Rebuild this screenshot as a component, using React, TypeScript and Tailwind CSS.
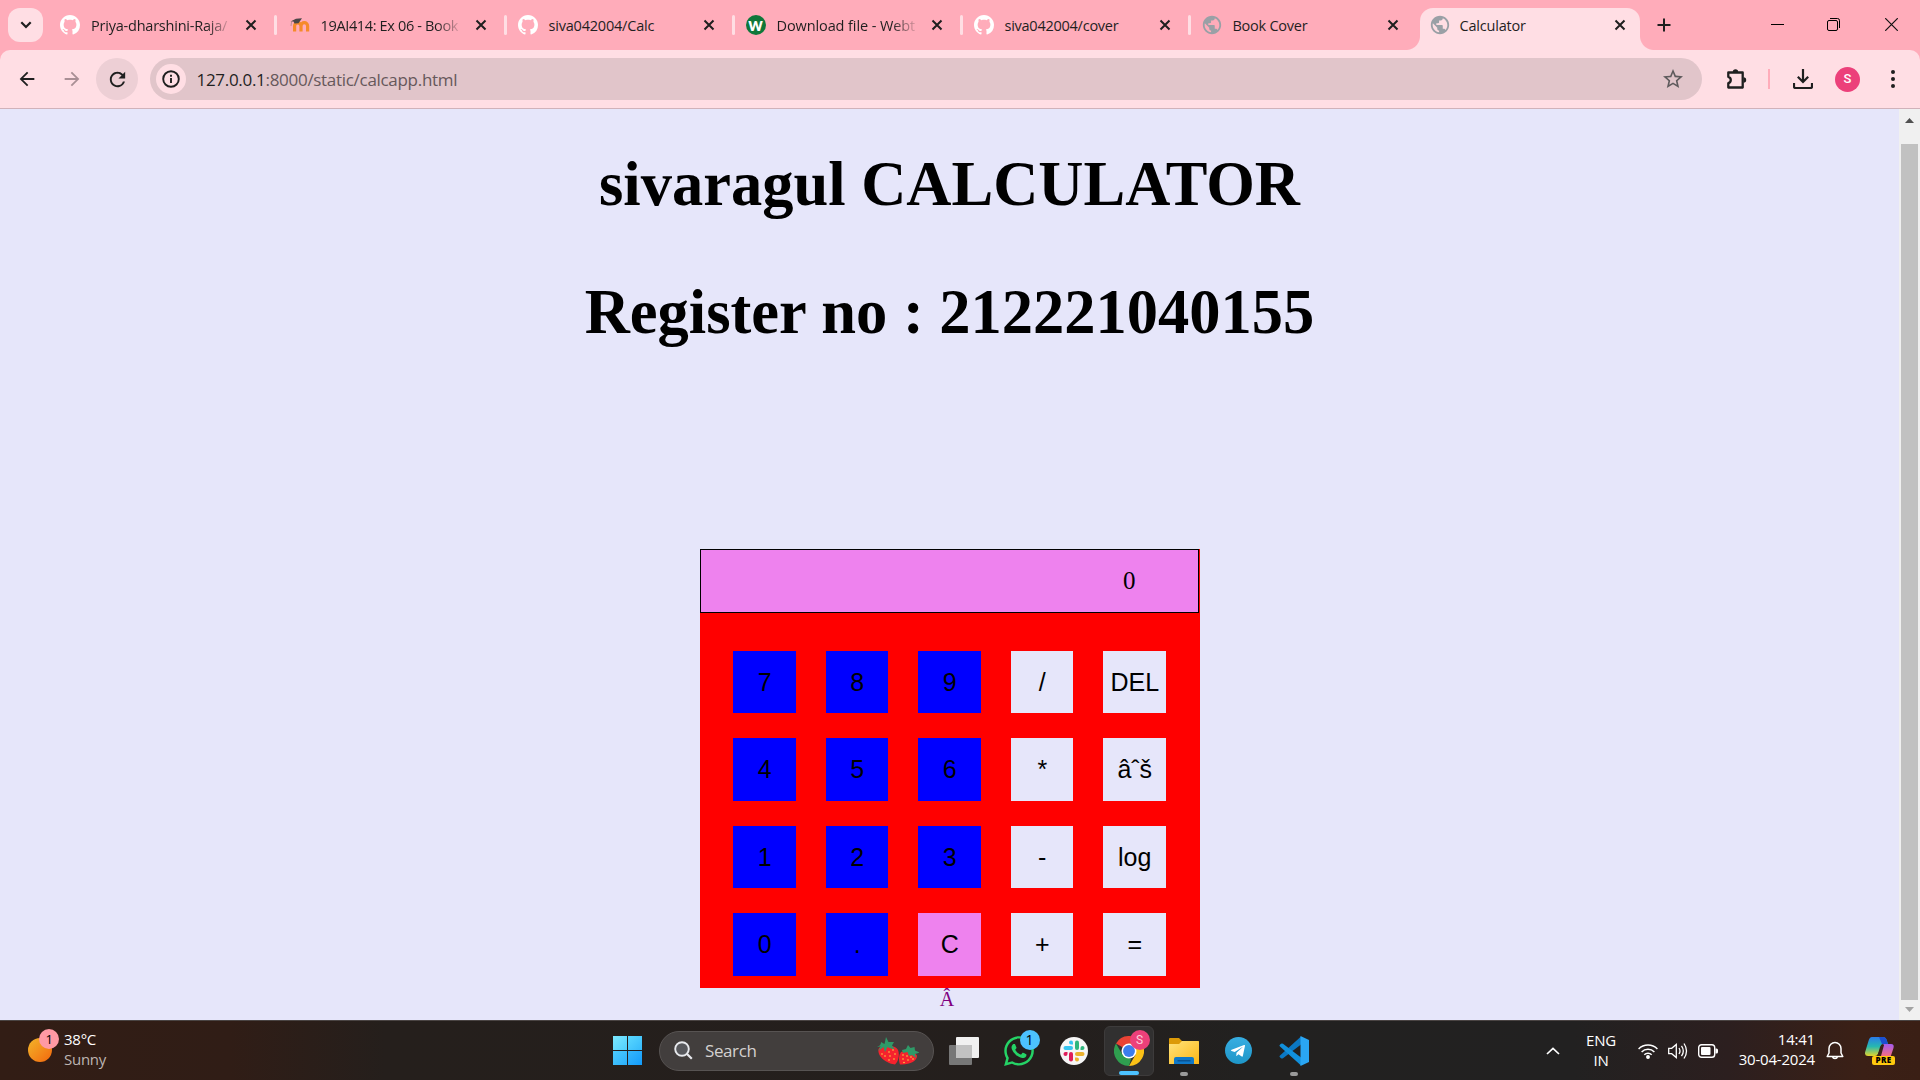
import React from "react";
import {
  MdArrowBack,
  MdArrowForward,
  MdPublic,
  MdRefresh,
  MdStarBorder,
} from "react-icons/md";
import { FaTelegramPlane, FaWhatsapp } from "react-icons/fa";

const GitHubMark = () => (
  <svg viewBox="0 0 16 16" className="h-5 w-5 fill-white">
    <path d="M8 0C3.58 0 0 3.58 0 8c0 3.54 2.29 6.53 5.47 7.59.4.07.55-.17.55-.38 0-.19-.01-.82-.01-1.49-2.01.37-2.53-.49-2.69-.94-.09-.23-.48-.94-.82-1.13-.28-.15-.68-.52-.01-.53.63-.01 1.08.58 1.23.82.72 1.21 1.87.87 2.33.66.07-.52.28-.87.51-1.07-1.78-.2-3.64-.89-3.64-3.95 0-.87.31-1.59.82-2.15-.08-.2-.36-1.02.08-2.12 0 0 .67-.21 2.2.82.64-.18 1.32-.27 2-.27s1.36.09 2 .27c1.53-1.04 2.2-.82 2.2-.82.44 1.1.16 1.92.08 2.12.51.56.82 1.27.82 2.15 0 3.07-1.87 3.75-3.65 3.95.29.25.54.73.54 1.48 0 1.07-.01 1.93-.01 2.2 0 .21.15.46.55.38A8.01 8.01 0 0 0 16 8c0-4.42-3.58-8-8-8z" />
  </svg>
);

const MoodleMark = () => (
  <svg viewBox="0 0 20 20" className="h-5 w-5">
    <path d="M4.600 16.500V11a3.200 3.200 0 0 1 6.400 0v5.500M11 11a3.200 3.200 0 0 1 6.600 0v5.500" fill="none" stroke="#f68a2a" strokeWidth="3.200" />
    <path d="M0.500 6.500 6 3.800l6-.6-3.500 5-4 .4-1-2z" fill="#4b4647" />
    <path d="M1.600 6.500 1 11" stroke="#b08a86" strokeWidth="0.800" />
  </svg>
);

const WMark = () => (
  <span className="flex h-5 w-5 items-center justify-center rounded-full bg-[#0f773a] pb-[3px] font-[Lato,sans-serif] text-[18px] leading-none font-black text-white">
    w
  </span>
);

const Globe = () => <MdPublic className="-m-px h-[22px] w-[22px] text-[#9aa0a6]" />;

const CloseX = () => (
  <svg viewBox="0 0 12 12" className="h-3 w-3 shrink-0">
    <path d="M1.500 1.500l9 9M10.500 1.500l-9 9" stroke="#1f1f1f" strokeWidth="2" />
  </svg>
);

const tabs = [
  { title: "Priya-dharshini-Raja/", icon: <GitHubMark />, track: "tracking-[-0.22px]", fade: true },
  { title: "19AI414: Ex 06 - Book", icon: <MoodleMark />, track: "tracking-[-0.35px]", fade: true },
  { title: "siva042004/Calc", icon: <GitHubMark />, track: "tracking-[-0.2px]", fade: false },
  { title: "Download file - Webt", icon: <WMark />, track: "tracking-[-0.1px]", fade: true },
  { title: "siva042004/cover", icon: <GitHubMark />, track: "tracking-[-0.25px]", fade: false },
  { title: "Book Cover", icon: <Globe />, track: "tracking-[-0.25px]", fade: false },
];

function TabStrip() {
  return (
    <div className="flex h-[50px] bg-[#ffacba]">
      <div className="mt-2 ml-2 flex h-[34px] w-[35px] items-center justify-center rounded-xl bg-[#ffdee4]">
        <svg viewBox="0 0 12 8" className="h-2 w-3">
          <path d="M1.300 1.300 6 6l4.700-4.700" fill="none" stroke="#1f1f1f" strokeWidth="2.200" />
        </svg>
      </div>
      <div className="ml-[17px] flex">
        {tabs.map((t, i) => (
          <div key={t.title} className={`flex h-[50px] items-center ${i === 0 ? "w-[229.500px]" : "w-[228px]"}`}>
            {t.icon}
            <span
              className={`mt-[2px] ml-[11px] w-[141px] text-[14.500px] leading-5 whitespace-nowrap ${t.track} ${
                t.fade ? "[mask-image:linear-gradient(to_right,black_115px,transparent_142px)]" : ""
              }`}
            >
              {t.title}
            </span>
            <span className="ml-[13px]">
              <CloseX />
            </span>
            <span className={`ml-[17px] h-5 w-[3px] rounded-full ${i < 5 ? "bg-[#ffdee4]" : ""}`} />
          </div>
        ))}
      </div>
      <div className="-ml-[24px] flex items-end">
        <span className="h-[14px] w-[14px] bg-[radial-gradient(circle_at_0_0,#ffacba_13.500px,#ffdee4_14.500px)]" />
        <div className="flex h-[42px] w-[220px] items-center rounded-t-[13px] bg-[#ffdee4] pb-2 pl-[10px]">
          <Globe />
          <span className="mt-[2px] ml-[10px] w-[141px] text-[14.500px] leading-5 tracking-[-0.2px]">Calculator</span>
          <span className="ml-[13px]">
            <CloseX />
          </span>
        </div>
        <span className="h-[14px] w-[14px] bg-[radial-gradient(circle_at_100%_0,#ffacba_13.500px,#ffdee4_14.500px)]" />
      </div>
      <svg viewBox="0 0 14 14" className="mt-[18px] ml-[3px] h-[14px] w-[14px]">
        <path d="M7 .5v13M.5 7h13" stroke="#1f1f1f" strokeWidth="2" />
      </svg>
      <div className="ml-auto flex items-start pt-[18px] pr-[22px]">
        <span className="mt-[6px] h-px w-[13px] bg-black" />
        <svg viewBox="0 0 13 13" className="ml-[43px] h-[13px] w-[13px] overflow-visible">
          <rect x=".5" y="2.500" width="10" height="10" rx="1.500" fill="none" stroke="#000" />
          <path d="M3 .5h7.500a2 2 0 0 1 2 2V10" fill="none" stroke="#000" />
        </svg>
        <svg viewBox="0 0 13 13" className="ml-[45px] h-[13px] w-[13px]">
          <path d="M.2.2l12.600 12.600M12.800.2.2 12.800" stroke="#111" strokeWidth="1.200" />
        </svg>
      </div>
    </div>
  );
}

function Toolbar() {
  return (
    <div className="h-[59px] border-b border-[#d0b2ba] bg-[#ffacba]">
      <div className="flex h-[58px] items-center rounded-t-[10px] bg-[#ffdee4]">
        <MdArrowBack className="ml-4 h-[22px] w-[22px] text-[#1f1f1f]" />
        <MdArrowForward className="ml-[23px] h-[22px] w-[22px] text-[#a98f95]" />
        <div className="ml-[13px] flex h-[42px] w-[42px] items-center justify-center rounded-full bg-[#edcfd5]">
          <MdRefresh className="h-[23px] w-[23px] text-[#1f1f1f]" />
        </div>
        <div className="ml-3 flex h-[42px] w-[1552px] items-center rounded-full bg-[#e1c5ca] pl-[6px]">
          <span className="flex h-[30px] w-[30px] items-center justify-center rounded-full bg-[#ffdee4]">
            <svg viewBox="0 0 18 18" className="h-[18px] w-[18px]">
              <circle cx="9" cy="9" r="7.800" fill="none" stroke="#1f1f1f" strokeWidth="1.900" />
              <path d="M9 8v5M9 4.800v1.900" stroke="#1f1f1f" strokeWidth="1.900" />
            </svg>
          </span>
          <span className="mt-px ml-[10.500px] text-[17px] leading-6 tracking-[-0.3px] text-[#66585b]">
            <span className="text-[#1f1f1f]">127.0.0.1</span>:8000/static/calcapp.html
          </span>
          <MdStarBorder className="mr-[17px] ml-auto h-6 w-6 text-[#5f5b5d]" />
        </div>
        <svg viewBox="0 0 22 22" className="ml-[23px] h-[22px] w-[22px]">
          <path d="M3.300 4.500h14.400v15H3.300v-4.300c3.300-1 3.300-5.400 0-6.400z" fill="none" stroke="#1f1f1f" strokeWidth="2.300" strokeLinejoin="round" />
          <path d="M7.800 4a2.700 2.700 0 0 1 5.400 0zM18.500 9.300a2.700 2.700 0 0 1 0 5.400z" fill="#1f1f1f" />
        </svg>
        <span className="ml-[21px] h-5 w-[2px] bg-[#ffacba]" />
        <svg viewBox="0 0 20 20" className="ml-[22.500px] h-5 w-5">
          <path d="M10 0v12.500M4.800 7.800 10 13l5.200-5.200M1 14v3.500q0 1.500 1.500 1.500h15q1.500 0 1.500-1.500V14" fill="none" stroke="#1f1f1f" strokeWidth="2.200" />
        </svg>
        <span className="ml-[22.500px] flex h-[25px] w-[25px] items-center justify-center rounded-full bg-[#ec407a] font-[Roboto,sans-serif] text-[13px] font-medium text-white">
          S
        </span>
        <span className="ml-[31px] flex flex-col gap-[3px]">
          <i className="h-1 w-1 rounded-full bg-[#1f1f1f]" />
          <i className="h-1 w-1 rounded-full bg-[#1f1f1f]" />
          <i className="h-1 w-1 rounded-full bg-[#1f1f1f]" />
        </span>
      </div>
    </div>
  );
}

const keys = [
  "7", "8", "9", "/", "DEL",
  "4", "5", "6", "*", "âˆš",
  "1", "2", "3", "-", "log",
  "0", ".", "C", "+", "=",
];

const keyColor = (k: string) =>
  k === "C" ? "bg-[#ee82ee]" : /^[0-9.]$/.test(k) ? "bg-[#0000ff]" : "bg-[#e6e6fa]";

function Page() {
  return (
    <main className="flex h-[911px]">
      <div className="flex w-[1899px] flex-col items-center bg-[#e6e6fa] font-['Liberation_Serif',serif] text-black">
        <h1 className="mt-[39px] text-[62.500px] leading-[72px] font-bold">sivaragul CALCULATOR</h1>
        <h1 className="mt-[56px] text-[62.500px] leading-[72px] font-bold">Register no : 212221040155</h1>
        <div className="mt-[201px] ml-px h-[439px] w-[500px] bg-[#ff0000]">
          <div className="flex h-16 w-[499px] items-center justify-end border border-black bg-[#ee82ee] pr-[62.500px] pb-[2px] text-[25px] leading-none">
            0
          </div>
          <div className="mt-[37.500px] ml-[33px] grid w-[433px] grid-cols-[repeat(5,62.500px)] gap-x-[30px] gap-y-[25px]">
            {keys.map((k) => (
              <button
                key={k}
                className={`flex h-[62.500px] w-[62.500px] items-center justify-center pt-px pl-px font-['Liberation_Sans',sans-serif] text-[25px] whitespace-nowrap ${keyColor(k)}`}
              >
                {k}
              </button>
            ))}
          </div>
        </div>
        <p className="text-[20px] leading-[23px] text-[#800080]">{"Â\u00a0"}</p>
      </div>
      <div className="flex w-[21px] flex-col items-center bg-[#f0f0f0]">
        <svg viewBox="0 0 9 5" className="mt-[9px] h-[5px] w-[9px]">
          <path d="M4.500 0 9 5H0z" fill="#505050" />
        </svg>
        <div className="mt-[21px] h-[856px] w-[17px] bg-[#c1c1c1]" />
        <svg viewBox="0 0 9 5" className="mt-[7px] h-[5px] w-[9px]">
          <path d="M0 0h9L4.500 5z" fill="#a3a3a3" />
        </svg>
      </div>
    </main>
  );
}

function Badge({ children, className }: { children: React.ReactNode; className: string }) {
  return (
    <span className={`absolute flex h-5 w-5 items-center justify-center rounded-full leading-none ${className}`}>
      {children}
    </span>
  );
}

function TaskItem({ children, active, bar }: { children: React.ReactNode; active?: boolean; bar?: string }) {
  return (
    <div className="flex h-[60px] w-[55px] items-center justify-center">
      <div
        className={`relative flex h-[50px] w-[50px] items-center justify-center rounded-md ${
          active ? "border border-[#3d3b3b] bg-[#313030]" : ""
        }`}
      >
        {children}
        {bar && <span className={`absolute bottom-0 h-1 rounded-full ${bar}`} />}
      </div>
    </div>
  );
}

const Strawberries = () => (
  <svg viewBox="0 0 42 28" className="h-7 w-[42px]">
    <path d="M1.500 12C4 7 17 7 21 13c2 5 0 12-3 14.500C12 27 0 21 1.500 12z" fill="#f5222d" />
    <path d="M24 15c5-2 14-1 16 4 0 5-7 9-17 8.500-1.500-4-1.500-9 1-12.500z" fill="#f5222d" />
    <path d="M0 10c3-1 4-3 4-5l3.500 2L9 0l2.500 5 5.500 0-2 3.500 3 4-5.500-1.500-2-1-2.500 5-1.500-5-5 4 2-4.500z" fill="#2f9a68" />
    <path d="M25 13l4-1 2-4 2.500 3 4-1 .5 3.500 4.500 2-4.500 1.500 1 4-4-3-3 1-1.500-4-4.500 1z" fill="#2f9a68" />
    <g fill="#ffd23f">
      <circle cx="5" cy="17" r=".8" /><circle cx="12" cy="15" r=".8" /><circle cx="16" cy="13" r=".8" />
      <circle cx="8" cy="19" r=".8" /><circle cx="13" cy="19" r=".8" /><circle cx="18" cy="17" r=".8" />
      <circle cx="12" cy="23" r=".8" /><circle cx="17" cy="22" r=".8" /><circle cx="26" cy="18" r=".8" />
      <circle cx="30" cy="19" r=".8" /><circle cx="34" cy="20" r=".8" /><circle cx="26" cy="22" r=".8" />
      <circle cx="31" cy="23" r=".8" /><circle cx="36" cy="22" r=".8" /><circle cx="27" cy="25.500" r=".8" />
    </g>
  </svg>
);

const Slack = () => (
  <svg viewBox="0 0 28 28" className="h-7 w-7">
    <circle cx="14" cy="14" r="14" fill="#f6f6f6" />
    <g fill="#36c5f0"><rect x="3.500" y="9" width="9.500" height="4" rx="2" /><path d="M13 7.500h-2a2 2 0 1 1 2-2z" /></g>
    <g fill="#2eb67d"><rect x="15" y="3.500" width="4" height="9.500" rx="2" /><path d="M20.500 13v-2a2 2 0 1 1 2 2z" /></g>
    <g fill="#ecb22e"><rect x="15" y="15" width="9.500" height="4" rx="2" /><path d="M15 20.500h2a2 2 0 1 1-2 2z" /></g>
    <g fill="#e01e5a"><rect x="9" y="15" width="4" height="9.500" rx="2" /><path d="M7.500 15v2a2 2 0 1 1-2-2z" /></g>
  </svg>
);

const Chrome = () => (
  <svg viewBox="0 0 48 48" className="h-[30px] w-[30px]">
    <path d="M24 24 3.200 12A24 24 0 0 1 44.800 12H24z" fill="#ea4335" />
    <path d="M24 12h20.800A24 24 0 0 1 24 48l10.400-18z" fill="#fbc116" />
    <path d="M3.200 12 13.600 30 24 36l3.500 0L24 48A24 24 0 0 1 3.200 12z" fill="#2f9e4f" />
    <circle cx="24" cy="24" r="12" fill="#fff" />
    <circle cx="24" cy="24" r="9.500" fill="#3b7ded" />
  </svg>
);

const Explorer = () => (
  <svg viewBox="0 0 30 26" className="h-[26px] w-[30px]">
    <defs>
      <linearGradient id="folder" x1="0" y1="0" x2="1" y2="1">
        <stop offset="0" stopColor="#ffe37c" />
        <stop offset="1" stopColor="#fcb614" />
      </linearGradient>
    </defs>
    <path d="M0 1q0-1 1-1h9l3 3h16q1 0 1 1v3H0z" fill="#dc9a07" />
    <path d="M0 6h10l3-3h16q1 0 1 1v22H0z" fill="url(#folder)" />
    <path d="M5 26v-5q0-2 2-2h16q2 0 2 2v5z" fill="#0f78c8" />
    <path d="M8.500 22.800h13" stroke="#084c88" strokeWidth="1.200" />
  </svg>
);

const VSCode = () => (
  <svg viewBox="0 0 30 30" className="h-[30px] w-[30px]">
    <path d="M1 19.500 22 0.500v8L4 22.200q-1 .6-2 0l-1.300-1.200q-.6-.8.3-1.500z" fill="#0b78c4" />
    <path d="M1 10.500 22 29.500v-8L4 7.800q-1-.6-2 0L.7 9q-.6.8.3 1.500z" fill="#1190dc" />
    <path d="M21.500 0 30 4v22l-8.500 4z" fill="#2aa6f3" />
  </svg>
);

const Copilot = () => (
  <svg viewBox="0 0 30 28" className="h-7 w-[30px]">
    <defs>
      <linearGradient id="cpA" x1="0" y1="0" x2="0" y2="1">
        <stop offset="0" stopColor="#2a7bea" />
        <stop offset=".5" stopColor="#26b8b0" />
        <stop offset="1" stopColor="#e3d52b" />
      </linearGradient>
      <linearGradient id="cpB" x1="0" y1="0" x2="0" y2="1">
        <stop offset="0" stopColor="#a45cf0" />
        <stop offset="1" stopColor="#fb6f77" />
      </linearGradient>
    </defs>
    <path d="M7 0h11q3 0 4 4l1 3h-5q-2 0-3 3l-2 7q-1 2-3 2H3q-4 0-2.700-4.500L3.500 4Q4.500 0 7 0z" fill="url(#cpA)" />
    <path d="M14 0h4q3 0 4 4l1 3h-6z" fill="#1b4fd1" />
    <path d="M19 7h7q3.500 0 2.500 4l-3 9H11q3 0 4-3l2-8z" fill="url(#cpB)" />
    <path d="M17 8h2l-3 11h-4z" fill="#3a2219" />
  </svg>
);

function Taskbar() {
  return (
    <footer className="flex h-[60px] items-center border-t border-[#4a4443] bg-[linear-gradient(90deg,#321d15_0%,#301d16_12%,#251f1c_20%,#241f1d_55%,#222120_65%,#222121_82%,#2c1f1f_90%,#3b2016_97%,#3a1f15_100%)] text-[15px] leading-5 tracking-[-0.25px] text-white">
      <div className="relative ml-7 h-[25px] w-6">
        <div className="h-6 w-6 rounded-full bg-linear-to-br from-[#f0b429] to-[#f2650c]" />
        <Badge className="-top-[9px] left-[11px] bg-[#ff99a4] text-[13px] text-black">1</Badge>
      </div>
      <div className="ml-[12px] w-[101px] pb-[3px]">
        <div>38°C</div>
        <div className="text-[#bdb5b2]">Sunny</div>
      </div>
      <div className="ml-[448px] grid h-[29px] w-[29px] grid-cols-2 gap-px">
        <span className="bg-linear-to-br from-[#7be8ff] to-[#4fd0fd]" />
        <span className="bg-linear-to-br from-[#5ad8ff] to-[#35bafb]" />
        <span className="bg-linear-to-br from-[#4ccbfd] to-[#2bb0fb]" />
        <span className="bg-linear-to-br from-[#35b7fb] to-[#119bfa]" />
      </div>
      <div className="ml-[17px] flex h-10 w-[275px] items-center rounded-full border border-[#575352] bg-[#423e3d] pl-[14px]">
        <svg viewBox="0 0 19 19" className="h-[19px] w-[19px]">
          <circle cx="8" cy="8" r="6.800" fill="#57585c" stroke="#e8eaee" strokeWidth="1.900" />
          <path d="m13 13 4.800 4.800" stroke="#e8eaee" strokeWidth="2.200" />
        </svg>
        <span className="ml-3 text-[17px] tracking-[-0.4px] text-[#d4d1d0]">Search</span>
        <span className="mr-[14px] ml-auto">
          <Strawberries />
        </span>
      </div>
      <div className="ml-[2px] flex">
        <TaskItem>
          <svg viewBox="0 0 30 28" className="h-7 w-[30px]">
            <rect x="7" y="0" width="23" height="21" rx="1" fill="#f1f1f1" />
            <rect x="0" y="8" width="23" height="20" rx="1" fill="#777" />
            <rect x="7" y="8" width="16" height="13" fill="#c2c2c2" />
          </svg>
        </TaskItem>
        <TaskItem>
          <FaWhatsapp className="h-[34px] w-[34px] text-[#25d366]" />
          <Badge className="top-1 left-[26px] bg-[#4cc2ff] text-[14px] text-black">1</Badge>
        </TaskItem>
        <TaskItem>
          <Slack />
        </TaskItem>
        <TaskItem active bar="w-5 bg-[#4cc2ff]">
          <Chrome />
          <Badge className="top-[3px] left-[25px] bg-[#ec407a] font-[Roboto,sans-serif] text-[12px] text-[#fbd0dd]">S</Badge>
        </TaskItem>
        <TaskItem bar="w-2 bg-[#9a9a9a]">
          <Explorer />
        </TaskItem>
        <TaskItem>
          <span className="flex h-[27px] w-[27px] items-center justify-center rounded-full bg-linear-to-b from-[#37aee2] to-[#1e96c8]">
            <FaTelegramPlane className="mr-[2px] h-4 w-4 text-white" />
          </span>
        </TaskItem>
        <TaskItem bar="w-2 bg-[#9a9a9a]">
          <VSCode />
        </TaskItem>
      </div>
      <svg viewBox="0 0 14 8" className="ml-[225px] h-2 w-[14px]">
        <path d="m1 7 6-5.700L13 7" fill="none" stroke="#fff" strokeWidth="1.700" />
      </svg>
      <div className="ml-[21px] w-10 pb-[2px] text-center">
        <div>ENG</div>
        <div>IN</div>
      </div>
      <svg viewBox="0 0 20 16" className="ml-[17px] h-4 w-5" fill="none" stroke="#fff" strokeWidth="1.500">
        <path d="M.6 6a13.300 13.300 0 0 1 18.800 0M3.600 9a9 9 0 0 1 12.800 0M6.300 11.800a5.200 5.200 0 0 1 7.400 0" />
        <circle cx="10" cy="14" r="1.200" fill="#fff" />
      </svg>
      <svg viewBox="0 0 20 18" className="ml-[10px] h-[18px] w-5" fill="none" stroke="#fff" strokeWidth="1.300">
        <path d="M.7 6.300h3L8.300 2.500v13L3.700 11.700h-3zM11 6q2 3 0 6M13.500 3.800q3.600 5.200 0 10.400M16 1.500q5 7.500 0 15" />
      </svg>
      <svg viewBox="0 0 20 14" className="ml-[10px] h-[14px] w-5">
        <rect x=".7" y=".7" width="16" height="12.600" rx="2.800" fill="none" stroke="#fff" strokeWidth="1.400" />
        <rect x="3" y="3" width="9.500" height="8" rx="1" fill="#fff" />
        <path d="M17.500 4.500h1q1.500 0 1.500 1.500v2q0 1.500-1.500 1.500h-1z" fill="#fff" />
      </svg>
      <div className="ml-[17px] w-20 pb-[3px] text-right tracking-[-0.2px] whitespace-nowrap">
        <div>14:41</div>
        <div>30-04-2024</div>
      </div>
      <svg viewBox="0 0 18 20" className="ml-[11px] h-5 w-[18px]" fill="none" stroke="#fff" strokeWidth="1.500">
        <path d="M9 1.500a6 6 0 0 0-6 6V12l-1.800 3.500h15.600L15 12V7.500a6 6 0 0 0-6-6zM6.500 15.700a2.600 2.600 0 0 0 5 0" strokeLinejoin="round" />
      </svg>
      <div className="relative ml-[21px]">
        <Copilot />
        <span className="absolute top-[19px] left-[7px] flex h-[9px] w-[23px] items-center justify-center rounded-[2px] bg-[#ffc90e] text-[8px] leading-none font-extrabold tracking-[0.3px] text-black">
          PRE
        </span>
      </div>
    </footer>
  );
}

export default function App() {
  return (
    <div className="h-[1080px] w-[1920px] overflow-hidden font-['Open_Sans','Noto_Sans',sans-serif] text-[#1f1f1f]">
      <TabStrip />
      <Toolbar />
      <Page />
      <Taskbar />
    </div>
  );
}
